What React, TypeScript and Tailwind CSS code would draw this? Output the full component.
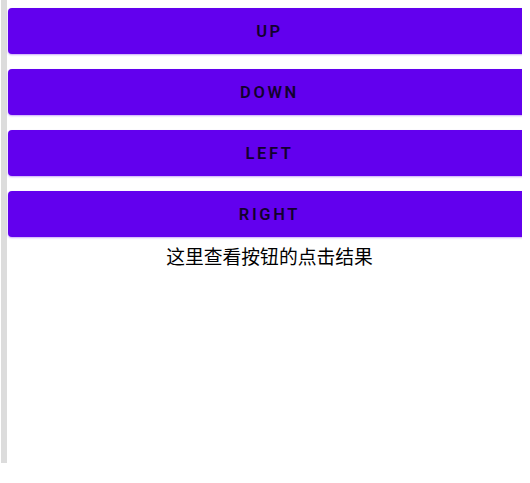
const buttons = ["UP", "DOWN", "LEFT", "RIGHT"];

export default function App() {
  return (
    <div className="h-[483px] w-[530px] bg-white">
      <div className="flex h-[463px] w-[522px] overflow-hidden">
        <div className="ml-px h-full w-[6px] shrink-0 bg-[#dcdcdc]" />
        <div className="flex flex-1 flex-col pt-[8px] pl-px">
          {buttons.map((label) => (
            <button
              key={label}
              className="mb-[15px] flex h-[46px] w-[523px] shrink-0 items-center justify-center rounded-[4px] bg-[#6200ee] pt-[3px] text-[16.5px] font-semibold tracking-[0.16em] text-[#12002e] shadow-[0_1px_2px_rgba(98,0,238,0.35)]"
              style={{ fontFamily: "Roboto, 'Liberation Sans', sans-serif" }}
            >
              {label}
            </button>
          ))}
          <p
            className="-mt-[8px] text-center text-[18.8px] leading-[24px] text-black"
            style={{ fontFamily: "'Noto Sans CJK SC', sans-serif" }}
          >
            这里查看按钮的点击结果
          </p>
        </div>
      </div>
    </div>
  );
}
